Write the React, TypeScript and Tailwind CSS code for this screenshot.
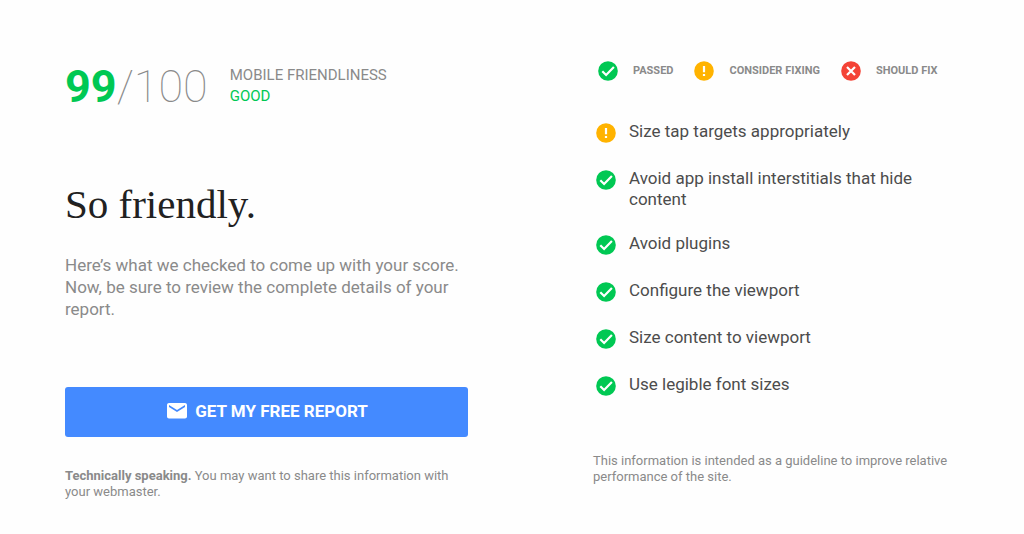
const Check = () => (
  <svg viewBox="0 0 24 24" className="size-6 shrink-0" aria-hidden="true">
    <circle cx="12" cy="12" r="9.800" fill="#00c853" />
    <path d="M6.300 12.300l3.800 3.700 7.800-7.900" fill="none" stroke="#fff" strokeWidth="2.200" />
  </svg>
);
const Warn = () => (
  <svg viewBox="0 0 24 24" className="size-6 shrink-0" aria-hidden="true">
    <circle cx="12" cy="12" r="9.800" fill="#ffb300" />
    <path d="M12 7v6.200M12 14.900v2.200" fill="none" stroke="#fff" strokeWidth="2.200" />
  </svg>
);
const Fail = () => (
  <svg viewBox="0 0 24 24" className="size-6 shrink-0" aria-hidden="true">
    <circle cx="12" cy="12" r="9.800" fill="#f44336" />
    <path d="M8 8l8 8M16 8l-8 8" fill="none" stroke="#fff" strokeWidth="2.200" />
  </svg>
);

const checks = [
  { label: "Size tap targets appropriately", ok: false },
  { label: "Avoid app install interstitials that hide content", ok: true },
  { label: "Avoid plugins", ok: true },
  { label: "Configure the viewport", ok: true },
  { label: "Size content to viewport", ok: true },
  { label: "Use legible font sizes", ok: true },
];

export default function App() {
  return (
    <main className="grid min-h-screen grid-cols-[403fr_363fr] gap-x-[125px] bg-[#fefefe] pt-[60px] pr-[68px] pl-[65px] font-['Roboto',sans-serif]">
      <section>
        <div className="flex gap-[22px]">
          <p className="text-[45px] leading-[54px] font-thin text-[#8a8a8a]">
            <b className="font-bold text-[#00c853]">99</b>/100
          </p>
          <p className="pt-[5px] text-[15px] leading-[21px] text-[#8a8a8a]">
            MOBILE FRIENDLINESS
            <span className="block text-[#00c853]">GOOD</span>
          </p>
        </div>
        <h1 className="mt-[66px] font-['Roboto_Slab','Liberation_Serif',serif] text-[41px] leading-[48px] font-light text-[#212121]">So friendly.</h1>
        <p className="mt-[26px] text-[17px] leading-[22px] text-[#8a8a8a]">
          Here’s what we checked to come up with your score. Now, be sure to review the complete details of your report.
        </p>
        <button className="mt-[67px] flex h-[50px] w-full items-center justify-center gap-[6px] rounded-[3px] bg-[#448aff] text-[17px] font-bold text-white">
          <svg viewBox="0 0 24 24" className="size-6" fill="currentColor" aria-hidden="true">
            <path d="M20 3H4c-1.100 0-1.990.900-1.990 2L2 16.500c0 1.100.900 2 2 2h16c1.100 0 2-.900 2-2V5c0-1.100-.900-2-2-2zm0 4l-8 5-8-5V5l8 5 8-5v2z" />
          </svg>
          GET MY FREE REPORT
        </button>
        <p className="mt-[31px] text-[13px] leading-[16px] text-[#8a8a8a]">
          <b>Technically speaking.</b> You may want to share this information with your webmaster.
        </p>
      </section>
      <section>
        <div className="-mt-px flex items-center gap-[19px] pl-[3px] text-[11px] leading-5 font-bold text-[#8a8a8a]">
          <span className="flex items-center gap-[13px]"><Check />PASSED</span>
          <span className="flex items-center gap-[13px]"><Warn />CONSIDER FIXING</span>
          <span className="flex items-center gap-[13px]"><Fail />SHOULD FIX</span>
        </div>
        <ul className="mt-[38px] flex flex-col gap-[23px] pr-7 pl-px">
          {checks.map((c) => (
            <li key={c.label} className="flex gap-[11px] text-[17px] leading-[21px] text-[#4c4c4c]">
              {c.ok ? <Check /> : <Warn />}
              {c.label}
            </li>
          ))}
        </ul>
        <p className="mt-[55px] text-[13px] leading-[16px] text-[#8a8a8a]">
          This information is intended as a guideline to improve relative performance of the site.
        </p>
      </section>
    </main>
  );
}
